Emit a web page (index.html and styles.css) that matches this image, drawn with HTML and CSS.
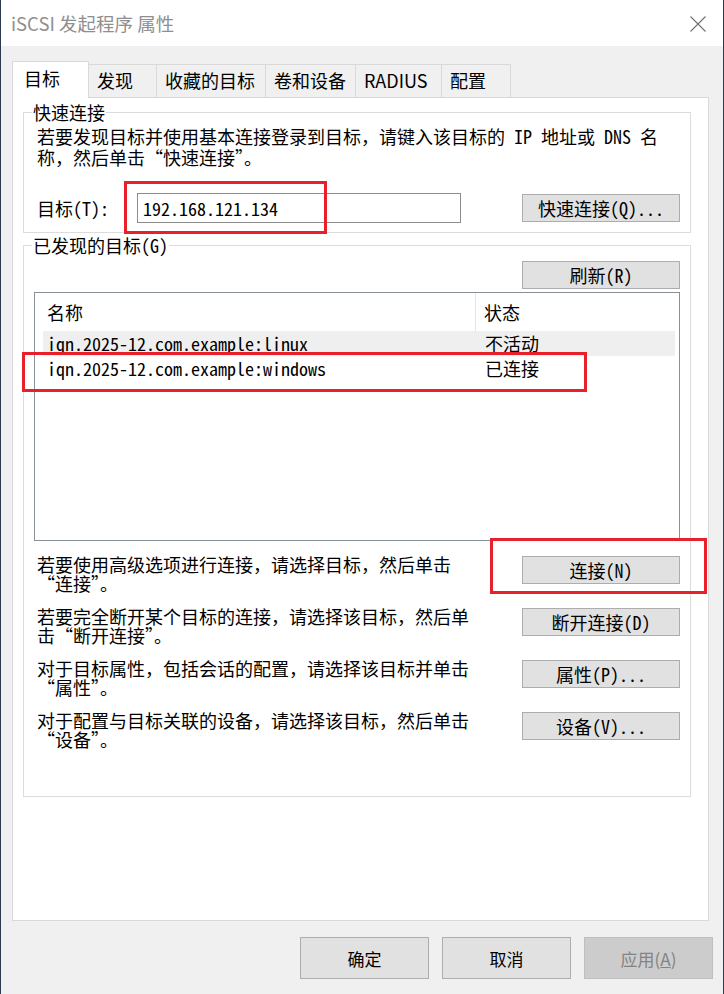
FILE: index.html
```html
<!DOCTYPE html>
<html lang="zh-CN">
<head>
  <meta charset="UTF-8">
  <meta name="viewport" content="width=device-width, initial-scale=1.0">
  <title>iSCSI 发起程序 属性</title>
  <link rel="stylesheet" href="styles.css">
</head>
<body>
  <div class="window">
    <div class="titlebar">
      <span class="title">iSCSI 发起程序 属性</span>
      <svg class="close" width="16" height="16" viewBox="0 0 16 16">
        <path d="M0.5 0.5L15.5 15.5M15.5 0.5L0.5 15.5" stroke="#6f6f6f" stroke-width="1.1" fill="none"/>
      </svg>
    </div>

    <div class="content">
      <div class="tabs">
        <div class="tab active">目标</div>
        <div class="tab">发现</div>
        <div class="tab">收藏的目标</div>
        <div class="tab">卷和设备</div>
        <div class="tab">RADIUS</div>
        <div class="tab">配置</div>
      </div>

      <div class="panel">
        <fieldset class="group quick">
          <legend>快速连接</legend>
          <p class="desc">若要发现目标并使用基本连接登录到目标，请键入该目标的 IP 地址或 DNS 名<br>称，然后单击“快速连接”。</p>
          <div class="target-row">
            <label for="target">目标(T):</label>
            <input type="text" id="target" class="target-input" value="192.168.121.134">
            <button class="btn">快速连接(Q)...</button>
          </div>
        </fieldset>

        <fieldset class="group discovered">
          <legend>已发现的目标(G)</legend>
          <div class="refresh-row">
            <button class="btn">刷新(R)</button>
          </div>

          <div class="listview">
            <div class="lv-header">
              <span class="col-name">名称</span>
              <span class="col-state">状态</span>
            </div>
            <div class="lv-row hover">
              <span class="col-name">iqn.2025-12.com.example:linux</span>
              <span class="col-state">不活动</span>
            </div>
            <div class="lv-row">
              <span class="col-name">iqn.2025-12.com.example:windows</span>
              <span class="col-state">已连接</span>
            </div>
          </div>

          <div class="actions">
            <div class="action-row">
              <p>若要使用高级选项进行连接，请选择目标，然后单击<br>“连接”。</p>
              <button class="btn">连接(N)</button>
            </div>
            <div class="action-row">
              <p>若要完全断开某个目标的连接，请选择该目标，然后单<br>击“断开连接”。</p>
              <button class="btn">断开连接(D)</button>
            </div>
            <div class="action-row">
              <p>对于目标属性，包括会话的配置，请选择该目标并单击<br>“属性”。</p>
              <button class="btn">属性(P)...</button>
            </div>
            <div class="action-row">
              <p>对于配置与目标关联的设备，请选择该目标，然后单击<br>“设备”。</p>
              <button class="btn">设备(V)...</button>
            </div>
          </div>
        </fieldset>
      </div>
    </div>

    <div class="footer">
      <button class="dlg-btn">确定</button>
      <button class="dlg-btn">取消</button>
      <button class="dlg-btn disabled">应用(<u>A</u>)</button>
    </div>

    <!-- red annotation boxes -->
    <div class="mark mark-target"></div>
    <div class="mark mark-row"></div>
    <div class="mark mark-connect"></div>
  </div>
</body>
</html>
```

FILE: styles.css
```css
html, body {
  margin: 0;
  padding: 0;
  width: 724px;
  height: 994px;
  overflow: hidden;
  background-color: #f0f0f0;
}

.window {
  position: relative;
  height: 994px;
  box-sizing: border-box;
  border-left: 1px solid #2c3a4d;
  border-right: 1px solid #2c3a4d;
  background-color: #f0f0f0;
  font-family: "Noto Sans Mono CJK SC", "Noto Sans CJK SC", monospace;
  font-size: 18px;
  color: #000;
}

/* title bar */
.titlebar {
  height: 46px;
  background-color: #fff;
  display: flex;
  align-items: center;
  justify-content: space-between;
  padding: 0 17px 0 10px;
}

.title {
  font-family: "Noto Sans CJK SC", sans-serif;
  font-size: 18.5px;
  color: #8f8f8f;
  margin-top: -1px;
}

.close {
  display: block;
  margin-top: 2px;
}

/* tabs */
.content {
  padding: 15px 0 0 11px;
}

.tabs {
  display: flex;
  align-items: flex-end;
  height: 37px;
  margin-bottom: -1px;
  position: relative;
  z-index: 1;
  font-family: "Noto Sans CJK SC", sans-serif;
  font-size: 18px;
}

.tab {
  box-sizing: border-box;
  height: 33px;
  margin-bottom: 1px;
  display: flex;
  align-items: center;
  padding-left: 8px;
  padding-bottom: 3px;
  border-top: 1px solid #d9d9d9;
  border-right: 1px solid #d9d9d9;
  background-color: #f0f0f0;
}

.tab.active {
  height: 37px;
  margin-bottom: 0;
  padding-left: 11px;
  padding-bottom: 4px;
  border-left: 1px solid #d9d9d9;
  background-color: #fff;
}

.tab:nth-child(1) { width: 77px; }
.tab:nth-child(2) { width: 68px; }
.tab:nth-child(3) { width: 109px; }
.tab:nth-child(4) { width: 90px; }
.tab:nth-child(5) { width: 86px; }
.tab:nth-child(6) { width: 69px; }

.panel {
  box-sizing: border-box;
  width: 697px;
  height: 824px;
  background-color: #fff;
  border: 1px solid #d9d9d9;
  overflow: hidden;
}

/* group boxes */
.group {
  box-sizing: border-box;
  width: 668px;
  margin: 0 0 0 10px;
  border: 1px solid #dcdcdc;
  padding: 0 10px 0 10px;
  min-inline-size: 0;
}

.group legend {
  padding: 0 1px;
  margin-left: -2px;
  line-height: 20px;
}

.quick {
  margin-top: 4px;
  padding-bottom: 9px;
}

.discovered {
  margin-top: 2px;
  padding-bottom: 33px;
}

.desc {
  margin: 4px 0 0 3px;
  line-height: 21px;
  white-space: nowrap;
}

.target-row {
  display: flex;
  align-items: center;
  height: 30px;
  margin-top: 25px;
  padding-left: 3px;
}

.target-row label {
  width: 100px;
}

.target-input {
  box-sizing: border-box;
  width: 324px;
  height: 30px;
  border: 1px solid #8c8c8c;
  padding: 0 0 0 5px;
  font-family: inherit;
  font-size: 18px;
  color: #000;
  outline: none;
}

.target-row .btn {
  margin-left: auto;
}

.btn {
  box-sizing: border-box;
  width: 158px;
  height: 28px;
  padding: 0;
  border: 1px solid #adadad;
  background-color: #e1e1e1;
  font-family: inherit;
  font-size: 18px;
  color: #000;
  line-height: 26px;
}

/* discovered targets */
.refresh-row {
  display: flex;
  justify-content: flex-end;
  padding-top: 6px;
}

.listview {
  box-sizing: border-box;
  height: 249px;
  margin-top: 3px;
  border: 1px solid #8a9098;
  padding: 0 4px 0 8px;
}

.lv-header,
.lv-row {
  display: flex;
  align-items: center;
}

.lv-header {
  height: 38px;
}

.lv-row {
  height: 25px;
  padding-bottom: 2px;
  box-sizing: border-box;
}

.lv-row.hover {
  background-color: #efefef;
}

.col-name {
  box-sizing: border-box;
  width: 433px;
  padding-left: 4px;
  white-space: nowrap;
}

.col-state {
  padding-left: 9px;
}

.lv-header .col-name {
  height: 100%;
  display: flex;
  align-items: center;
  border-right: 1px solid #e5e5e5;
}

.lv-header .col-state {
  padding-left: 8px;
}

.actions {
  margin-top: 14px;
}

.action-row {
  display: flex;
  align-items: flex-start;
  justify-content: space-between;
  height: 52px;
  padding-left: 3px;
}

.action-row p {
  margin: 0;
  line-height: 19px;
  white-space: nowrap;
}

.action-row .btn {
  margin-top: 1px;
}

/* footer buttons */
.footer {
  display: flex;
  justify-content: flex-end;
  gap: 13px;
  padding: 16px 10px 0 0;
}

.dlg-btn {
  box-sizing: border-box;
  width: 129px;
  height: 42px;
  border: 1px solid #adadad;
  background-color: #e1e1e1;
  font-family: "Noto Sans CJK SC", sans-serif;
  font-size: 17px;
  color: #000;
  padding: 0;
}

.dlg-btn.disabled {
  background-color: #cccccc;
  border-color: #bfbfbf;
  color: #838383;
}

/* red annotation boxes */
.mark {
  position: absolute;
  box-sizing: border-box;
  border: 3px solid #e8202a;
}

.mark-target {
  left: 123px;
  top: 181px;
  width: 203px;
  height: 53px;
}

.mark-row {
  left: 21px;
  top: 352px;
  width: 565px;
  height: 40px;
}

.mark-connect {
  left: 489px;
  top: 538px;
  width: 217px;
  height: 56px;
}
```
